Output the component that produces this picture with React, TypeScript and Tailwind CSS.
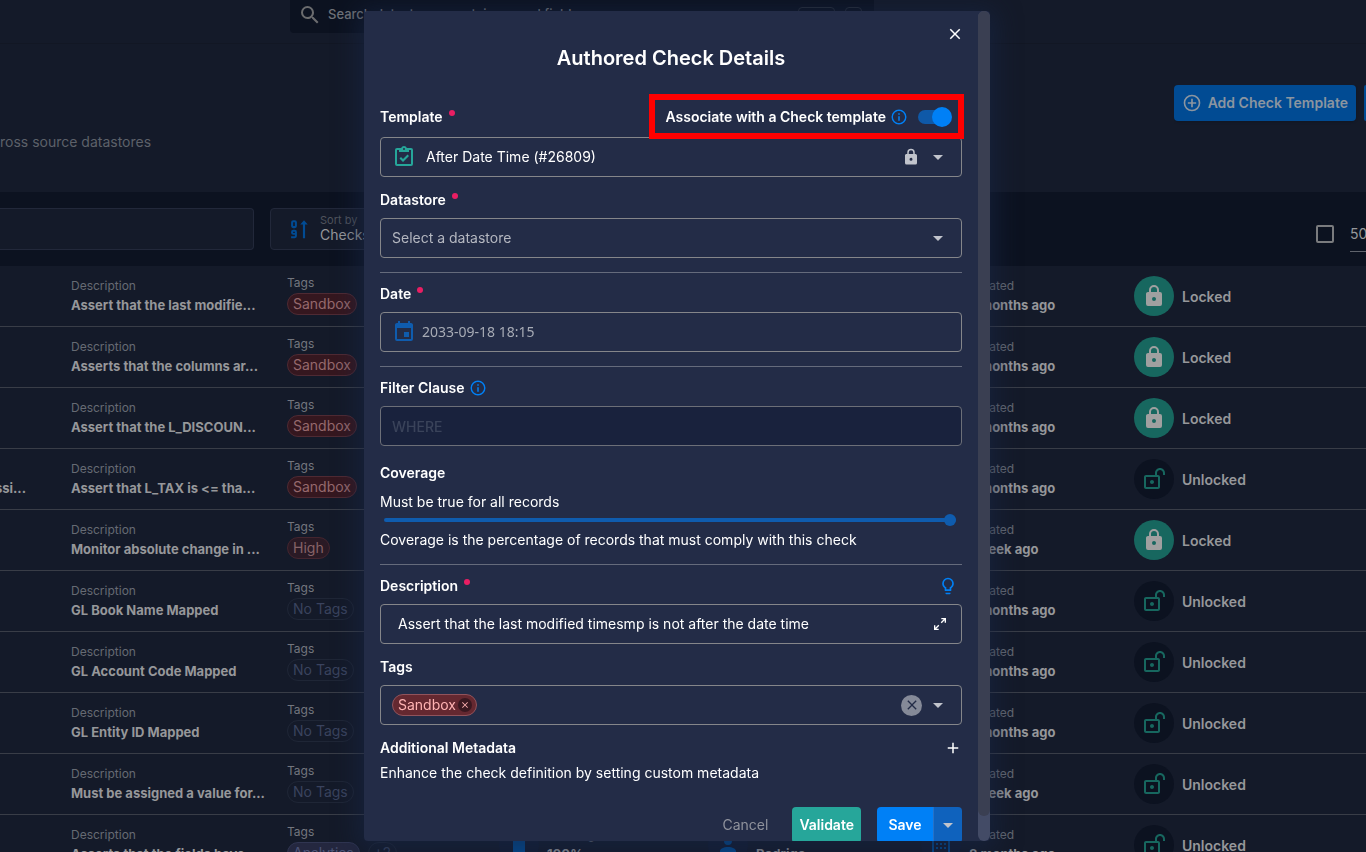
import React from "react";

const P = {
  lock: "M12,17A2,2 0 0,0 14,15C14,13.89 13.1,13 12,13A2,2 0 0,0 10,15A2,2 0 0,0 12,17M18,8A2,2 0 0,1 20,10V20A2,2 0 0,1 18,22H6A2,2 0 0,1 4,20V10C4,8.89 4.9,8 6,8H7V6A5,5 0 0,1 12,1A5,5 0 0,1 17,6V8H18M12,3A3,3 0 0,0 9,6V8H15V6A3,3 0 0,0 12,3Z",
  unlock: "M10 13C11.1 13 12 13.89 12 15C12 16.11 11.11 17 10 17S8 16.11 8 15 8.9 13 10 13M18 1C15.24 1 13 3.24 13 6V8H4C2.9 8 2 8.9 2 10V20C2 21.1 2.9 22 4 22H16C17.1 22 18 21.1 18 20V10C18 8.9 17.1 8 16 8H15V6C15 4.34 16.34 3 18 3S21 4.34 21 6V8H23V6C23 3.24 20.76 1 18 1M16 10V20H4V10H16Z",
  clipboard: "M19,3H14.82C14.4,1.84 13.3,1 12,1C10.7,1 9.6,1.84 9.18,3H5A2,2 0 0,0 3,5V19A2,2 0 0,0 5,21H19A2,2 0 0,0 21,19V5A2,2 0 0,0 19,3M12,3A1,1 0 0,1 13,4A1,1 0 0,1 12,5A1,1 0 0,1 11,4A1,1 0 0,1 12,3M7,7H17V5H19V19H5V5H7V7M7.5,13.5L9,12L11,14L15.5,9.5L17,11L11,17L7.5,13.5Z",
  calendar: "M19,19H5V8H19M16,1V3H8V1H6V3H5C3.89,3 3,3.89 3,5V19A2,2 0 0,0 5,21H19A2,2 0 0,0 21,19V5C21,3.89 20.1,3 19,3H18V1M17,12H12V17H17V12Z",
  bulb: "M12,2A7,7 0 0,1 19,9C19,11.38 17.81,13.47 16,14.74V17A1,1 0 0,1 15,18H9A1,1 0 0,1 8,17V14.74C6.19,13.47 5,11.38 5,9A7,7 0 0,1 12,2M9,21V20H15V21A1,1 0 0,1 14,22H10A1,1 0 0,1 9,21M12,4A5,5 0 0,0 7,9C7,11.05 8.23,12.81 10,13.58V16H14V13.58C15.77,12.81 17,11.05 17,9A5,5 0 0,0 12,4Z",
  search: "M9.5,3A6.5,6.5 0 0,1 16,9.5C16,11.11 15.41,12.59 14.44,13.73L14.71,14H15.5L20.5,19L19,20.5L14,15.5V14.71L13.73,14.44C12.59,15.41 11.11,16 9.5,16A6.5,6.5 0 0,1 3,9.5A6.5,6.5 0 0,1 9.5,3M9.5,5C7,5 5,7 5,9.5C5,12 7,14 9.5,14C12,14 14,12 14,9.5C14,7 12,5 9.5,5Z",
  info: "M11,9H13V7H11M12,20C7.59,20 4,16.41 4,12C4,7.59 7.59,4 12,4C16.41,4 20,7.59 20,12C20,16.41 16.41,20 12,20M12,2A10,10 0 0,0 2,12A10,10 0 0,0 12,22A10,10 0 0,0 22,12A10,10 0 0,0 12,2M11,17H13V11H11V17Z",
  plusCircle: "M12,20C7.59,20 4,16.41 4,12C4,7.59 7.59,4 12,4C16.41,4 20,7.59 20,12C20,16.41 16.41,20 12,20M12,2A10,10 0 0,0 2,12A10,10 0 0,0 12,22A10,10 0 0,0 22,12A10,10 0 0,0 12,2M13,7H11V11H7V13H11V17H13V13H17V11H13V7Z",
  down: "M7,10L12,15L17,10H7Z",
  expand: "M10,21V19H6.41L10.91,14.5L9.5,13.09L5,17.59V14H3V21H10M14.5,10.91L19,6.41V10H21V3H14V5H17.59L13.09,9.5L14.5,10.91Z",
  close: "M19,6.41L17.59,5L12,10.59L6.41,5L5,6.41L10.59,12L5,17.59L6.41,19L12,13.41L17.59,19L19,17.59L13.41,12L19,6.41Z",
  plus: "M19,13H13V19H11V13H5V11H11V5H13V11H19V13Z",
  account: "M12,4A4,4 0 0,1 16,8A4,4 0 0,1 12,12A4,4 0 0,1 8,8A4,4 0 0,1 12,4M12,14C16.42,14 20,15.79 20,18V20H4V18C4,15.79 7.58,14 12,14Z",
  month: "M3,3H21V22H3V3M5,8V20H19V8H5M7,10H9V12H7V10M11,10H13V12H11V10M15,10H17V12H15V10M7,14H9V16H7V14M11,14H13V16H11V14M15,14H17V16H15V14Z",
  sort: "M18 1.5L22.5 6.5H19.3V23H16.7V6.5H13.5L18 1.5M5 1.5H7A2.5 2.5 0 0 1 9.5 4V8.5A2.5 2.5 0 0 1 7 11H5A2.5 2.5 0 0 1 2.5 8.5V4A2.5 2.5 0 0 1 5 1.5M5 4V8.5H7V4H5M5 13H7A2.5 2.5 0 0 1 9.5 15.5V20.5A2.5 2.5 0 0 1 7 23H2.5V20.6H7V19H5A2.5 2.5 0 0 1 2.5 16.5V15.5A2.5 2.5 0 0 1 5 13M5 15.2V16.9H7V15.2H5Z",
};

function Icon({ d, className }: { d: string; className: string }) {
  return (
    <svg viewBox="0 0 24 24" fill="currentColor" fillRule={d === P.sort ? "evenodd" : undefined} aria-hidden="true" className={`shrink-0 ${className}`}>
      <path d={d} />
    </svg>
  );
}

type Row = { name?: string; desc: string; tag: "Sandbox" | "High" | "No Tags" | "Analytics"; ago: string; locked?: boolean; full?: boolean };

const rows: Row[] = [
  { desc: "Assert that the last modifie...", tag: "Sandbox", ago: "2 months ago", locked: true },
  { desc: "Asserts that the columns ar...", tag: "Sandbox", ago: "2 months ago", locked: true },
  { desc: "Assert that the L_DISCOUN...", tag: "Sandbox", ago: "2 months ago", locked: true },
  { name: "ssi...", desc: "Assert that L_TAX is <= tha...", tag: "Sandbox", ago: "2 months ago" },
  { desc: "Monitor absolute change in ...", tag: "High", ago: "1 week ago", locked: true },
  { desc: "GL Book Name Mapped", tag: "No Tags", ago: "3 months ago" },
  { desc: "GL Account Code Mapped", tag: "No Tags", ago: "3 months ago" },
  { desc: "GL Entity ID Mapped", tag: "No Tags", ago: "3 months ago" },
  { desc: "Must be assigned a value for...", tag: "No Tags", ago: "1 week ago" },
  { desc: "Asserts that the fields have ...", tag: "Analytics", ago: "8 months ago", full: true },
];

const tagStyle: Record<Row["tag"], string> = {
  Sandbox: "border-[#4f2a33] bg-[#35171f] text-[#96696d]",
  High: "border-[#44252f] bg-[#2a1a25] text-[#876368]",
  "No Tags": "border-[#1f2636] text-[#3a435e]",
  Analytics: "border-[#303551] bg-[#24273f] text-[#4d5477]",
};

function Field({ name, value }: { name: string; value: string }) {
  return (
    <div className="pt-3">
      <div className="text-xs leading-4 text-[#666a73]">{name}</div>
      <div className="mt-[2px] text-[13px] font-bold leading-[18px]">{value}</div>
    </div>
  );
}

function CheckRow({ row }: { row: Row }) {
  return (
    <li className="grid h-[61px] grid-cols-[71px_216px_212px_209px_213px_213px_1fr] border-b border-[#393d47] whitespace-nowrap">
      <div className="flex items-end justify-end pb-3 pr-[45px] text-[13px] font-bold leading-[18px]">{row.name}</div>
      <Field name="Description" value={row.desc} />
      <div className="pt-[9px]">
        <div className="text-xs leading-4 text-[#73767e]">Tags</div>
        <div className="mt-[2px] flex gap-2">
          <span className={`h-[22px] rounded-full border px-[5px] text-sm leading-5 ${tagStyle[row.tag]}`}>{row.tag}</span>
          {row.full && <span className="h-[22px] rounded-full border border-[#1f2636] px-[5px] text-sm leading-5 text-[#3a435e]">+2</span>}
        </div>
      </div>
      <div>
        {row.full && (
          <div className="flex items-start gap-2">
            <span className="mt-[10px] flex size-10 items-center justify-center rounded-full bg-[#131b30] text-[#014b93]">
              <span className="h-6 w-3 bg-current" />
            </span>
            <Field name="Coverage" value="100%" />
          </div>
        )}
      </div>
      <div>
        {row.full && (
          <div className="flex items-start gap-2">
            <span className="mt-[10px] flex size-10 items-center justify-center rounded-full bg-[#131b30] text-[#014b93]">
              <Icon d={P.account} className="size-6" />
            </span>
            <Field name="Author" value="Rodrigo" />
          </div>
        )}
      </div>
      <div className="flex justify-end gap-2 pr-[77px]">
        {row.full && (
          <span className="mt-[10px] flex size-10 items-center justify-center rounded-full bg-[#131b30] text-[#014b93]">
            <Icon d={P.month} className="size-6" />
          </span>
        )}
        <div className="w-[88px]">
          <Field name="Created" value={row.ago} />
        </div>
      </div>
      <div className="flex items-center gap-2">
        <span className={row.locked ? "flex size-10 items-center justify-center rounded-full bg-[#17675f] text-[#a0a0a0]" : "flex size-10 items-center justify-center rounded-full bg-[#0c1220] text-[#17675f]"}>
          <Icon d={row.locked ? P.lock : P.unlock} className="size-6" />
        </span>
        <span className="pt-[2px] text-sm font-semibold">{row.locked ? "Locked" : "Unlocked"}</span>
      </div>
    </li>
  );
}

function Required() {
  return <span aria-hidden="true" className="mb-2 ml-[6px] inline-block size-[6px] rounded-full bg-[#e91e63]" />;
}

const label = "flex items-center text-sm font-semibold leading-5";
const box = "flex h-10 w-full items-center rounded border border-[#85868a] px-[11px] text-sm";

function Dialog() {
  return (
    <div className="fixed inset-0 flex items-center justify-center py-[11px] pr-3">
      <section
        role="dialog"
        aria-labelledby="title"
        className="flex h-full w-full max-w-[626px] overflow-hidden rounded bg-[#232c47] text-white shadow-[0_4px_24px_6px_rgba(24,38,70,0.6)]"
      >
        <form className="min-w-0 flex-1 overflow-hidden px-4">
          <div className="flex h-8 items-end justify-end">
            <button type="button" aria-label="Close" className="-mr-[2px]"><Icon d={P.close} className="size-[18px]" /></button>
          </div>
          <h1 id="title" className="mt-px text-center text-xl font-semibold leading-7">Authored Check Details</h1>

          <div className="relative z-10 -mr-[2px] mt-[22px] flex items-center justify-between">
            <label htmlFor="template" className={label}>Template<Required /></label>
            <div className="flex h-[45px] items-center border-[6px] border-[#ff0000] pl-[10px] pr-[6px]">
              <label htmlFor="assoc" className={label}>Associate with a Check template</label>
              <Icon d={P.info} className="ml-1 size-[18px] text-[#0080f6]" />
              <span className="relative ml-[10px] flex h-5 w-[34px] items-center">
                <input id="assoc" type="checkbox" role="switch" defaultChecked className="h-[14px] w-[30px] appearance-none rounded-full bg-[#0f59a8]" />
                <span className="pointer-events-none absolute right-0 size-5 rounded-full bg-[#0080f6]" />
              </span>
            </div>
          </div>
          <button id="template" type="button" className={`${box} -mt-[2px]`}>
            <Icon d={P.clipboard} className="size-6 text-[#26a69a]" />
            <span className="ml-[10px] flex-1 text-left">After Date Time (#26809)</span>
            <Icon d={P.lock} className="size-[18px] text-[#c1c4cc]" />
            <Icon d={P.down} className="ml-[6px] size-6 text-[#c1c4cc]" />
          </button>

          <label htmlFor="datastore" className={`${label} mt-[13px]`}>Datastore<Required /></label>
          <div className="relative mt-2">
            <select id="datastore" className={`${box} appearance-none text-[#b4b7c0]`}>
              <option>Select a datastore</option>
            </select>
            <Icon d={P.down} className="pointer-events-none absolute right-3 top-2 size-6 text-[#c1c4cc]" />
          </div>
          <hr className="mt-[14px] border-[#656b7c]" />

          <label htmlFor="date" className={`${label} mt-[11px]`}>Date<Required /></label>
          <div className={`${box} mt-2`}>
            <Icon d={P.calendar} className="size-6 text-[#0f5cae]" />
            <input id="date" defaultValue="2033-09-18 18:15" className="ml-[6px] min-w-0 flex-1 bg-transparent font-['Noto_Sans',sans-serif] text-[#a7abb5]" />
          </div>
          <hr className="mt-[14px] border-[#656b7c]" />

          <label htmlFor="filter" className={`${label} mt-[11px]`}>
            Filter Clause<Icon d={P.info} className="ml-1 size-[18px] text-[#0080f6]" />
          </label>
          <input id="filter" placeholder="WHERE" className="mt-2 flex h-10 w-full items-center rounded border border-[#6c6f78] bg-[#19223d] px-[11px] text-sm font-medium placeholder:text-[#3a435a]" />

          <label htmlFor="coverage" className={`${label} mt-[17px]`}>Coverage</label>
          <p className="mt-[9px] text-sm leading-5">Must be true for all records</p>
          <div className="flex h-4 items-center pl-1 pr-[6px]">
            <input
              id="coverage"
              type="range"
              defaultValue={100}
              className="h-1 w-full appearance-none rounded-full bg-[#0f5cae] [&::-webkit-slider-thumb]:size-3 [&::-webkit-slider-thumb]:appearance-none [&::-webkit-slider-thumb]:rounded-full [&::-webkit-slider-thumb]:bg-[#0f5cae]"
            />
          </div>
          <p className="mt-[2px] text-sm leading-5">Coverage is the percentage of records that must comply with this check</p>
          <hr className="mt-[14px] border-[#656b7c]" />

          <div className="mt-[11px] flex items-center justify-between pr-1">
            <label htmlFor="description" className={label}>Description<Required /></label>
            <button type="button" aria-label="Suggest description"><Icon d={P.bulb} className="size-5 text-[#0080f6]" /></button>
          </div>
          <div className={`${box} mt-2`}>
            <input id="description" defaultValue="Assert that the last modified timesmp is not after the date time" className="ml-[6px] min-w-0 flex-1 bg-transparent" />
            <button type="button" aria-label="Expand" className="mr-[2px]"><Icon d={P.expand} className="size-4" /></button>
          </div>

          <label htmlFor="tags" className={`${label} mt-[13px]`}>Tags</label>
          <div id="tags" className={`${box} mt-2`}>
            <span className="flex h-[22px] items-center rounded-full border border-[#91535b] bg-[#652830] pl-[5px] pr-1 leading-5 text-[#ffb3b3]">
              Sandbox
              <button type="button" aria-label="Remove Sandbox" className="ml-[2px] flex size-[14px] items-center justify-center rounded-full bg-[#391820]">
                <Icon d={P.close} className="size-[10px]" />
              </button>
            </span>
            <button type="button" aria-label="Clear tags" className="ml-auto flex size-[21px] items-center justify-center rounded-full bg-[#858a98] text-[#232c47]">
              <Icon d={P.close} className="size-4" />
            </button>
            <Icon d={P.down} className="ml-1 size-6 text-[#c1c4cc]" />
          </div>

          <div className="mt-[13px] flex items-center justify-between">
            <h2 className={label}>Additional Metadata</h2>
            <button type="button" aria-label="Add metadata"><Icon d={P.plus} className="size-[18px]" /></button>
          </div>
          <p className="mt-[5px] text-sm leading-5">Enhance the check definition by setting custom metadata</p>

          <div className="mt-6 flex h-9 items-stretch justify-end gap-4 text-sm">
            <button type="button" className="px-2 text-[#8f929c]">Cancel</button>
            <button type="button" className="rounded bg-[#26a69a] px-[7px] font-semibold">Validate</button>
            <div className="flex">
              <button type="submit" className="w-14 rounded-l bg-[#0080f6] font-semibold">Save</button>
              <button type="button" aria-label="More save options" className="flex w-[29px] items-center justify-center rounded-r border-l border-[#2672c8] bg-[#0f62bd] text-[#c1c4cc]">
                <Icon d={P.down} className="size-6" />
              </button>
            </div>
          </div>
        </form>
        <div className="w-3 rounded-full bg-[#434b66] pb-[25px]">
          <div className="h-full rounded-full bg-[#3a3f52]" />
        </div>
      </section>
    </div>
  );
}

export default function App() {
  return (
    <div className="h-screen overflow-hidden bg-[#141a29] font-[Inter,'Liberation_Sans',sans-serif] text-[#96979a]">
      <header className="flex h-[44px] border-b border-[#121724] pl-[290px]">
        <label className="flex h-[33px] w-full max-w-[584px] items-center gap-[6px] rounded-b bg-[#0c1220] pl-2 text-[13px]">
          <Icon d={P.search} className="mb-1 size-6 text-[#6b6c6e]" />
          <input placeholder="Search datastores, containers and fields" className="mb-[3px] min-w-0 flex-1 bg-transparent font-medium placeholder:text-[#707379]" />
          <span className="mb-[6px] h-5 w-[37px] self-end rounded border border-[#272c38]" />
          <span className="mb-[6px] ml-1 mr-3 h-5 w-[17px] self-end rounded border border-[#272c38]" />
        </label>
      </header>
      <div className="flex h-[148px] justify-between">
        <p className="mt-[88px] text-sm leading-5 text-[#5d6169]">ross source datastores</p>
        <div className="mt-[41px] flex gap-2 overflow-hidden">
          <button type="button" className="flex h-9 items-center gap-[6px] rounded bg-[#014b93] px-2 text-sm font-semibold text-[#8b95a0] shadow">
            <Icon d={P.plusCircle} className="size-5" />Add Check Template
          </button>
          <button type="button" aria-label="Add check" className="h-9 w-[2px] rounded-l bg-[#014b93]" />
        </div>
      </div>
      <div className="flex h-[74px] items-center bg-[#0c1220]">
        <input aria-label="Filter checks" className="h-[42px] w-[254px] rounded-r border border-l-0 border-[#22283a] bg-[#141a29]" />
        <button type="button" className="ml-4 flex h-[42px] w-52 items-center gap-2 rounded border border-[#22283a] bg-[#141a29] pl-[18px] text-left">
          <Icon d={P.sort} className="size-5 text-[#014b93]" />
          <span className="ml-[3px]">
            <span className="block text-[11px] leading-3 text-[#4f535c]">Sort by</span>
            <span className="block text-sm leading-[18px]">Checks</span>
          </span>
        </button>
        <label className="ml-auto flex items-center gap-4">
          <input type="checkbox" aria-label="Select all" className="mt-[10px] size-[18px] appearance-none rounded-[2px] border-2 border-[#7a7b7e]" />
          <span className="mt-[14px] h-[31px] w-4 overflow-hidden border-b border-[#5f636c] text-sm leading-[26px]">50</span>
        </label>
      </div>
      <ul>
        {rows.map((r) => <CheckRow key={r.desc} row={r} />)}
      </ul>
      <Dialog />
    </div>
  );
}
